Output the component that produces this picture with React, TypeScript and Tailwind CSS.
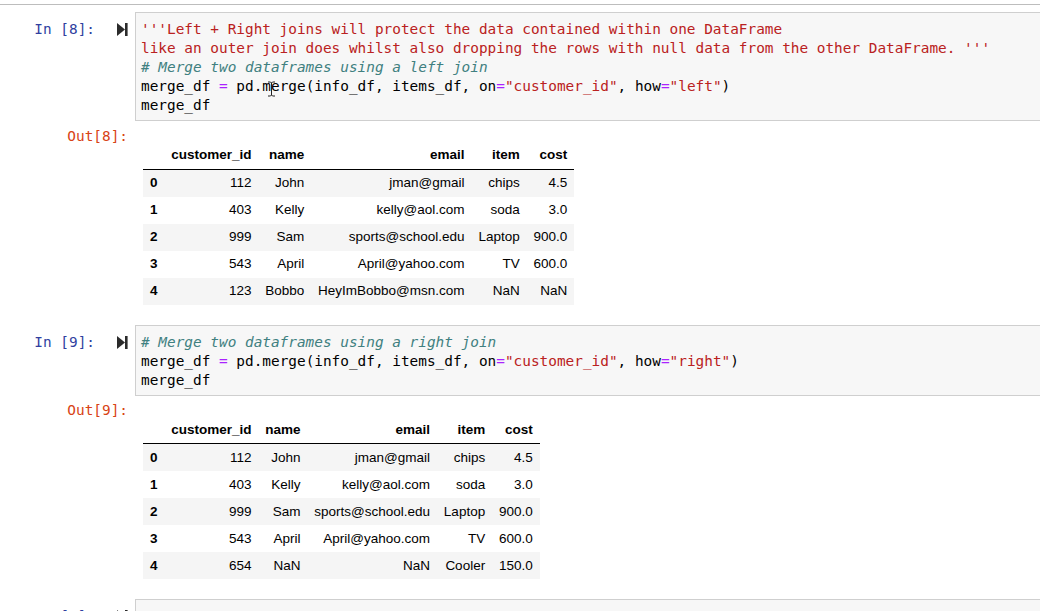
import React from "react";

const mono = "font-['DejaVu_Sans_Mono','Liberation_Mono',monospace] text-[14.4px] leading-[19px]";

function RunIcon() {
  return (
    <svg width="11" height="13" viewBox="0 0 11 13" className="block">
      <polygon points="0,0 8,6.5 0,13" fill="#2b2b2b" />
      <rect x="8" y="0" width="2.6" height="13" fill="#2b2b2b" />
    </svg>
  );
}

function Cursor() {
  return (
    <svg width="9" height="16" viewBox="0 0 9 16" className="absolute left-[131px] top-[68px]">
      <path d="M1 1 H3.5 L4.5 2 L5.5 1 H8 M4.5 2 V14 M1 15 H3.5 L4.5 14 L5.5 15 H8" stroke="#222" strokeWidth="1" fill="none" />
    </svg>
  );
}

type Line = React.ReactNode;

function InputCell({ n, lines, children }: { n: string; lines: Line[]; children?: React.ReactNode }) {
  return (
    <div className="flex">
      <div className={`${mono} w-[135px] shrink-0 flex justify-end items-start pt-[8px] pr-[7px]`}>
        <span className="text-[#303f9f]">In [{n}]:</span>
        <span className="ml-[22px] mt-[3px]">
          <RunIcon />
        </span>
      </div>
      <div className="relative flex-1 mr-[-40px] border border-[#cfcfcf] bg-[#f7f7f7] pt-[7px] pb-[5px] pl-[5px]">
        <div className={`${mono} whitespace-pre text-black`}>
          {lines.map((l, i) => (
            <div key={i} className="h-[19px]">{l}</div>
          ))}
        </div>
        {children}
      </div>
    </div>
  );
}

type Row = [string, string, string, string, string, string];

function DataTable({ rows }: { rows: Row[] }) {
  const cell = "px-[6.9px] py-[6.75px] leading-[13.5px] text-right";
  const heads = ["", "customer_id", "name", "email", "item", "cost"];
  return (
    <table className="border-collapse font-['Liberation_Sans',Arial,sans-serif] text-[13.5px] text-black">
      <thead className="border-b border-black">
        <tr>
          {heads.map((h, i) => (
            <th key={i} className={`${cell} font-bold`}>{h}</th>
          ))}
        </tr>
      </thead>
      <tbody>
        {rows.map((r, i) => (
          <tr key={i} className={i % 2 === 0 ? "bg-[#f5f5f5]" : "bg-white"}>
            <th className={`${cell} font-bold text-left`}>{r[0]}</th>
            {r.slice(1).map((c, j) => (
              <td key={j} className={cell}>{c}</td>
            ))}
          </tr>
        ))}
      </tbody>
    </table>
  );
}

function OutputCell({ n, rows }: { n: string; rows: Row[] }) {
  return (
    <div className="flex">
      <div className={`${mono} w-[135px] shrink-0 text-right pr-[7px] pt-[5.5px] text-[#d84315]`}>Out[{n}]:</div>
      <div className="ml-[8px] mt-[20.5px]">
        <DataTable rows={rows} />
      </div>
    </div>
  );
}

const S = ({ children }: { children: React.ReactNode }) => <span className="text-[#ba2121]">{children}</span>;
const O = ({ children }: { children: React.ReactNode }) => <span className="text-[#aa22ff]">{children}</span>;
const C = ({ children }: { children: React.ReactNode }) => <span className="text-[#408080] italic">{children}</span>;

const rows1: Row[] = [
  ["0", "112", "John", "jman@gmail", "chips", "4.5"],
  ["1", "403", "Kelly", "kelly@aol.com", "soda", "3.0"],
  ["2", "999", "Sam", "sports@school.edu", "Laptop", "900.0"],
  ["3", "543", "April", "April@yahoo.com", "TV", "600.0"],
  ["4", "123", "Bobbo", "HeyImBobbo@msn.com", "NaN", "NaN"],
];

const rows2: Row[] = [
  ["0", "112", "John", "jman@gmail", "chips", "4.5"],
  ["1", "403", "Kelly", "kelly@aol.com", "soda", "3.0"],
  ["2", "999", "Sam", "sports@school.edu", "Laptop", "900.0"],
  ["3", "543", "April", "April@yahoo.com", "TV", "600.0"],
  ["4", "654", "NaN", "NaN", "Cooler", "150.0"],
];

export default function App() {
  return (
    <div className="w-[1040px] h-[611px] overflow-hidden bg-white">
      <div className="h-[4px] bg-white" />
      <div className="h-px bg-[#bdbdbd]" />
      <div className="pt-[7px]">
        <InputCell
          n="8"
          lines={[
            <S>'''Left + Right joins will protect the data contained within one DataFrame</S>,
            <S>like an outer join does whilst also dropping the rows with null data from the other DataFrame. '''</S>,
            <C># Merge two dataframes using a left join</C>,
            <>merge_df <O>=</O> pd.merge(info_df, items_df, on<O>=</O><S>"customer_id"</S>, how<O>=</O><S>"left"</S>)</>,
            <>merge_df</>,
          ]}
        >
          <Cursor />
        </InputCell>
        <OutputCell n="8" rows={rows1} />
      </div>
      <div className="pt-[20px]">
        <InputCell
          n="9"
          lines={[
            <C># Merge two dataframes using a right join</C>,
            <>merge_df <O>=</O> pd.merge(info_df, items_df, on<O>=</O><S>"customer_id"</S>, how<O>=</O><S>"right"</S>)</>,
            <>merge_df</>,
          ]}
        />
        <OutputCell n="9" rows={rows2} />
      </div>
      <div className="pt-[20px]">
        <InputCell n=" " lines={[<> </>]} />
      </div>
    </div>
  );
}
